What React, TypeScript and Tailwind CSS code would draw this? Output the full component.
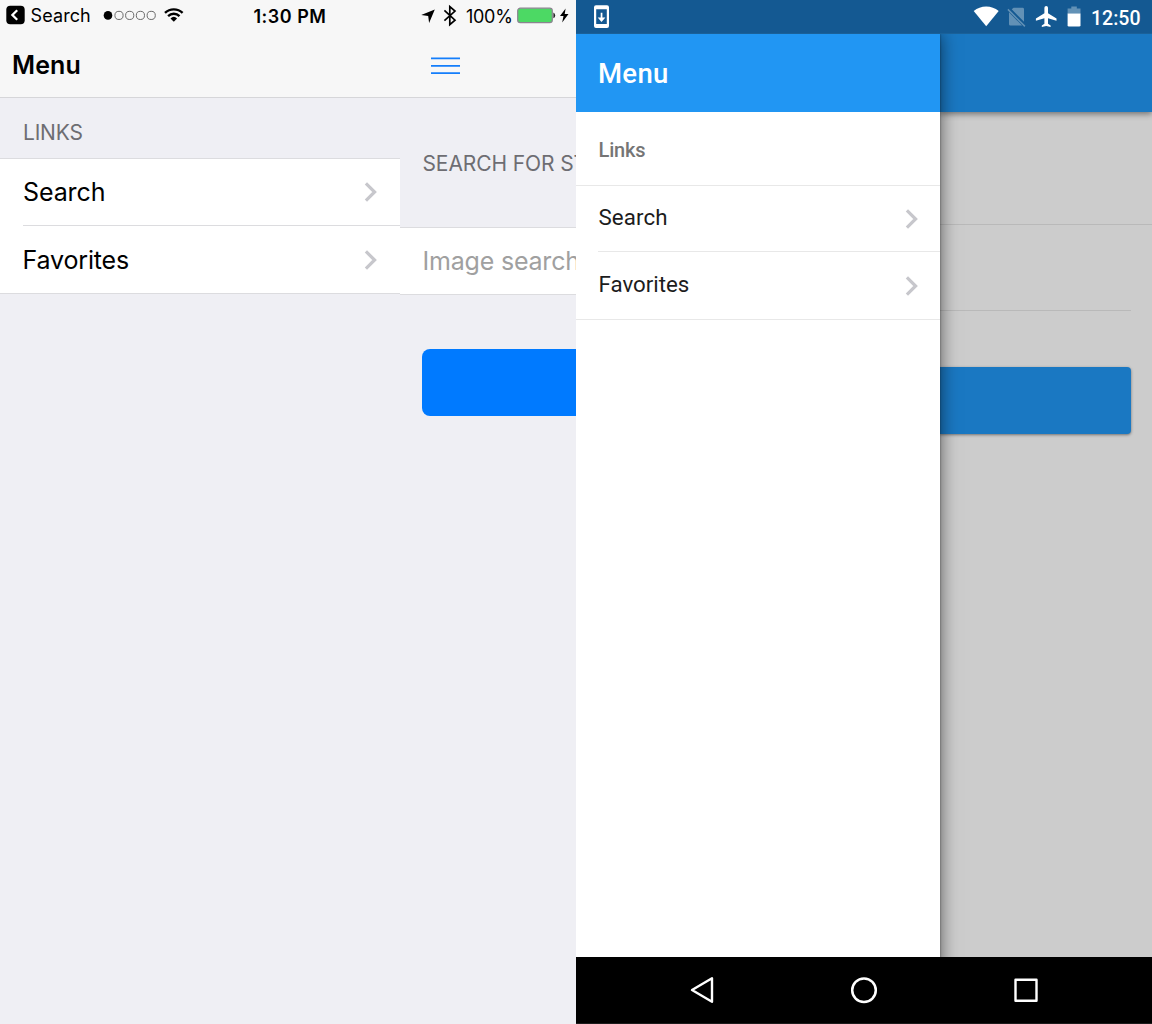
import type { ReactNode } from 'react';

function Chevron({ className = '' }: { className?: string }) {
  return (
    <svg className={className} width="14" height="22" viewBox="0 0 14 22" fill="none" stroke="#c7c7cc" strokeWidth="3.2">
      <path d="M1.9 2.4 10.6 11 1.9 19.6" />
    </svg>
  );
}

function IosStatusBar() {
  return (
    <div className="flex h-[31px] shrink-0 items-center bg-[#f7f7f7] text-lg leading-none text-black">
      <svg className="ml-1.5 shrink-0" width="19" height="31" viewBox="6 0 19 31">
        <rect x="6.3" y="5.7" width="18.4" height="18.5" rx="4" />
        <path d="M17.2 10.3 12.4 15l4.8 4.7" fill="none" stroke="#fff" strokeWidth="2.3" />
      </svg>
      <span className="ml-[5.5px] w-[72px] tracking-[0.1px]">Search</span>
      <svg className="shrink-0" width="54" height="31" viewBox="103 0 54 31" fill="none" stroke="#5a5a5a" strokeWidth="0.9">
        <circle cx="108" cy="15.4" r="4.3" fill="#000" stroke="none" />
        <circle cx="119" cy="15.4" r="4.1" />
        <circle cx="129.7" cy="15.4" r="4.1" />
        <circle cx="140.4" cy="15.4" r="4.1" />
        <circle cx="151.2" cy="15.4" r="4.1" />
      </svg>
      <svg className="ml-[7px] shrink-0" width="20" height="31" viewBox="164 0 20 31" fill="none" stroke="#000" strokeWidth="2.4">
        <path d="M165 12.9a12.7 12.7 0 0 1 17.6 0" />
        <path d="M168.1 16.1a8.2 8.2 0 0 1 11.4 0" />
        <path d="M173.8 21.7l-3.3-3.3a4.8 4.8 0 0 1 6.6 0z" fill="#000" stroke="none" />
      </svg>
      <span className="ml-[70px] w-[166px] pt-[2px] whitespace-nowrap font-semibold tracking-[0.5px]">1:30 PM</span>
      <svg className="shrink-0" width="16" height="31" viewBox="420 0 16 31">
        <path d="M434.8 9.4 421.2 15.1l7 1 .9 6.8z" />
      </svg>
      <svg className="ml-[7px] shrink-0" width="14" height="31" viewBox="443 0 14 31" fill="none" stroke="#000" strokeWidth="1.7">
        <path d="M444.4 10.4 455 20.2l-5.2 4.5V6.6l5.2 4.5-10.6 9.6" />
      </svg>
      <span className="ml-[9.5px] w-[50.5px] pt-[2px] tracking-[-0.3px]">100%</span>
      <svg className="shrink-0" width="53" height="31" viewBox="517 0 53 31">
        <rect x="517.7" y="8.2" width="34.6" height="14.4" rx="2.6" fill="#4cd964" stroke="#8b8490" strokeWidth="1.2" />
        <path d="M553.4 12.6q1.8.9 1.8 2.8t-1.8 2.8z" fill="#222" />
        <path d="M565.6 8.4 560 16.1h3.5l-1.3 6.4 6.3-8.6h-3.8z" />
      </svg>
    </div>
  );
}

function IosItem({ children, last = false }: { children: ReactNode; last?: boolean }) {
  return (
    <div className="flex pl-[23px]">
      <div
        className={
          last
            ? 'flex h-[67px] flex-1 items-center justify-between pr-[22px]'
            : 'flex h-[67px] flex-1 items-center justify-between border-b border-[#dcdcdf] pr-[22px]'
        }
      >
        {children}
        <Chevron />
      </div>
    </div>
  );
}

function IosPhone() {
  return (
    <section className="flex h-full w-[576px] flex-col overflow-hidden bg-[#efeff4] font-['Inter',sans-serif]">
      <IosStatusBar />
      <div className="flex flex-1">
        <div className="w-[400px] shrink-0">
          <header className="flex h-[67px] items-center border-b border-[#d6d6d9] bg-[#f7f7f7] pt-[2px] pl-[12px]">
            <h1 className="text-[25px] leading-none font-semibold tracking-[0.1px] text-black">Menu</h1>
          </header>
          <h2 className="flex h-[61px] items-center border-b border-[#dcdcdf] pt-[9px] pl-[23px] text-[21px] leading-none tracking-[-0.2px] text-[#6d6d72]">
            LINKS
          </h2>
          <nav className="border-b border-[#dcdcdf] bg-white text-[25px] leading-none text-black">
            <IosItem>
              <span className="tracking-[-0.1px]">Search</span>
            </IosItem>
            <IosItem last>
              <span className="-ml-[0.5px] pt-px tracking-[-0.15px]">Favorites</span>
            </IosItem>
          </nav>
        </div>
        <div className="w-[176px] overflow-hidden">
          <header className="flex h-[67px] items-center border-b border-[#d6d6d9] bg-[#f7f7f7] pt-[3px] pl-[31px]">
            <svg width="29" height="18" viewBox="0 0 29 18" stroke="#147efb" strokeWidth="1.7">
              <path d="M0 1.4h29M0 8.9h29M0 16.2h29" />
            </svg>
          </header>
          <h2 className="flex h-[130px] items-center whitespace-nowrap border-b border-[#dcdcdf] pt-[2px] pl-[22.5px] text-[21px] leading-none tracking-[-0.1px] text-[#6d6d72]">
            SEARCH FOR ST
          </h2>
          <div className="flex h-[67px] items-center whitespace-nowrap border-b border-[#dcdcdf] bg-white pt-px pl-[22.5px] text-[25px] leading-none tracking-[-0.2px] text-[#a0a0a0]">
            Image search
          </div>
          <div className="mt-[53.5px] ml-[22.4px] h-[67.5px] w-[200px] rounded-lg bg-[#007aff]" />
        </div>
      </div>
    </section>
  );
}

function AndroidStatusBar() {
  return (
    <div className="flex h-[34px] shrink-0 items-center border-b border-[#1a6199] bg-[#145992] text-white">
      <svg className="ml-[17px] shrink-0" width="17" height="34" viewBox="593 0 17 34">
        <path
          fill="#fff"
          fillRule="evenodd"
          d="M596 5.3h11a2 2 0 0 1 2 2v18.8a2 2 0 0 1-2 2h-11a2 2 0 0 1-2-2V7.3a2 2 0 0 1 2-2zM596.2 9.3v14.8h10.6V9.3z"
        />
        <path fill="#fff" d="M600.7 12.7h1.7v4.8h3l-3.9 4.4-3.8-4.4h3z" />
      </svg>
      <svg className="ml-[363px] shrink-0" width="26" height="34" viewBox="973 0 26 34">
        <path d="M986.2 26.3 973.7 11a19.5 19.5 0 0 1 25 0z" fill="#fff" />
      </svg>
      <svg className="ml-2 shrink-0" width="20" height="34" viewBox="1007 0 20 34">
        <path d="M1013.6 7.8h9q1.4 0 1.4 1.4v12.6l-12.3-12.5zM1009 12.2l13.1 13.4H1010.4q-1.4 0-1.4-1.4z" fill="#6291b6" />
        <path d="m1007.9 9.4 17 17" stroke="#6291b6" strokeWidth="1.5" />
      </svg>
      <svg className="ml-[7px] shrink-0" width="24" height="34" viewBox="1034 0 24 34">
        <path
          d="M1056.5 20.7v-2.2l-8.5-5.2V7.7a1.8 1.8 0 0 0-3.6 0v5.6l-8.5 5.2v2.2l8.5-2.5v5.5l-2.6 1.7v1.7l4.4-1.1 4.4 1.1v-1.7l-2.6-1.7v-5.5z"
          fill="#fff"
        />
      </svg>
      <svg className="ml-2 shrink-0" width="16" height="34" viewBox="1066 0 16 34">
        <path d="M1067.6 8.5h3.7V6.6h5.5v1.9h3.7v5.2h-12.9z" fill="#6291b6" />
        <path d="M1067.6 13.4h12.9v11.8q0 1.3-1.3 1.3h-10.3q-1.3 0-1.3-1.3z" fill="#fff" />
      </svg>
      <span className="ml-[9px] pt-1 text-[19.5px] leading-none font-medium">12:50</span>
    </div>
  );
}

function AndroidItem({ children, last = false }: { children: ReactNode; last?: boolean }) {
  return (
    <div className="flex pl-[22px]">
      <div
        className={
          last
            ? 'flex h-[67px] flex-1 items-center justify-between pr-[21px]'
            : 'flex h-[66px] flex-1 items-center justify-between border-b border-[#e8e8e8] pr-[21px]'
        }
      >
        {children}
        <Chevron className="mt-px" />
      </div>
    </div>
  );
}

function AndroidPhone() {
  return (
    <section className="flex h-full w-[576px] flex-col overflow-hidden font-['Roboto',sans-serif]">
      <AndroidStatusBar />
      <div className="flex flex-1 overflow-hidden">
        <aside className="z-10 -mb-6 w-[364px] shrink-0 bg-white shadow-[0_0_17px_rgba(0,0,0,0.6),0_0_2px_rgba(0,0,0,0.4)]">
          <header className="flex h-[78px] items-center bg-[#2196f3] pt-[2px] pl-[22px]">
            <h1 className="text-[27.5px] leading-none font-medium tracking-[0.3px] text-white">Menu</h1>
          </header>
          <h2 className="flex h-[73px] items-center pt-[2px] pl-[22.5px] text-[20px] leading-none font-medium tracking-[-0.15px] text-[#757575]">
            Links
          </h2>
          <nav className="border-y border-[#e8e8e8] text-[22.3px] leading-none text-[#1c1c1c]">
            <AndroidItem>
              <span className="ml-[0.5px] pb-[2px] tracking-[0.1px]">Search</span>
            </AndroidItem>
            <AndroidItem last>
              <span className="ml-[0.5px] pb-[2px]">Favorites</span>
            </AndroidItem>
          </nav>
        </aside>
        <main className="flex-1 bg-[#ccc]">
          <div className="h-[78px] bg-[#1a78c2] shadow-[0_2px_6px_rgba(0,0,0,0.45)]" />
          <div className="h-[113px] border-b border-[#b9b9b9]" />
          <div className="mr-[21px] h-[86px] border-b border-[#b9b9b9]" />
          <div className="mt-14 mr-[21px] h-[67px] rounded-r bg-[#1a78c2] shadow-[0_1px_3px_rgba(0,0,0,0.45)]" />
        </main>
      </div>
      <footer className="flex h-[67px] shrink-0 items-center border-b border-[#1c1c1c] bg-black">
        <svg className="ml-[114px]" width="24" height="28" viewBox="0 0 24 28" fill="none" stroke="#fff" strokeWidth="2.4" strokeLinejoin="round">
          <path d="M22 2.3v23.4L2 14z" />
        </svg>
        <svg className="ml-[136px]" width="28" height="28" viewBox="0 0 28 28" fill="none" stroke="#fff" strokeWidth="2.5">
          <circle cx="14" cy="14.3" r="11.8" />
        </svg>
        <svg className="ml-[136px]" width="24" height="24" viewBox="0 0 24 24" fill="none" stroke="#fff" strokeWidth="2.4" strokeLinejoin="round">
          <rect x="1.5" y="1.7" width="21" height="21" />
        </svg>
      </footer>
    </section>
  );
}

export default function App() {
  return (
    <div className="flex h-[1024px] w-[1152px] overflow-hidden">
      <IosPhone />
      <AndroidPhone />
    </div>
  );
}
